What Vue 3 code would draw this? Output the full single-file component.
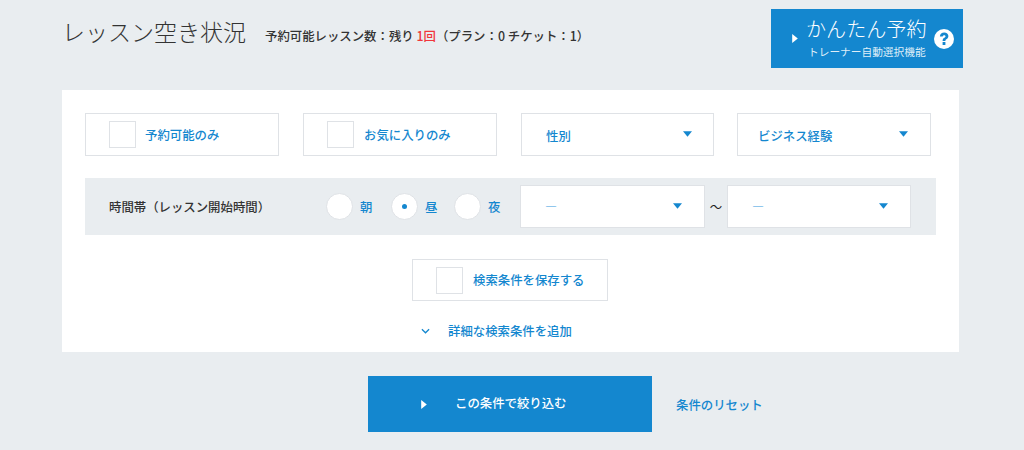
<script setup>
const chips = ['予約可能のみ', 'お気に入りのみ']
const drops = ['性別', 'ビジネス経験']
const periods = [
  { label: '朝', on: false },
  { label: '昼', on: true },
  { label: '夜', on: false },
]
</script>

<template>
  <main class="page">
    <header class="head">
      <h1 class="title">レッスン空き状況</h1>
      <p class="remain">予約可能レッスン数：残り <em>1回</em>（プラン：0 チケット：1）</p>
      <a class="easy">
        <svg class="tri easy-tri" viewBox="0 0 5 8"><path d="M0 0L5 4L0 8Z" /></svg>
        <span class="easy-text">
          <b>かんたん予約</b>
          <small>トレーナー自動選択機能</small>
        </span>
        <svg class="help" viewBox="0 0 20 20">
          <circle cx="10" cy="10" r="10" fill="#fff" />
          <path d="M5.9 7.6C6 5 7.8 3.5 10.2 3.5C12.6 3.5 14.4 5 14.4 7.1C14.4 8.7 13.5 9.6 12.4 10.3C11.6 10.8 11.4 11.2 11.4 12H8.6C8.6 10.4 9.1 9.5 10.3 8.8C11.2 8.3 11.5 7.9 11.5 7.3C11.5 6.6 11 6.2 10.2 6.2C9.3 6.2 8.8 6.8 8.7 7.6Z" fill="#1487cf" />
          <rect x="8.6" y="13" width="2.8" height="3" fill="#1487cf" />
        </svg>
      </a>
    </header>

    <section class="panel">
      <div class="filters">
        <label v-for="c in chips" :key="c" class="box chip">
          <span class="check"></span>
          <span>{{ c }}</span>
        </label>
        <div v-for="d in drops" :key="d" class="box drop">
          <span class="drop-label">{{ d }}</span>
          <svg class="caret" viewBox="0 0 10 6"><path d="M0 0H10L5 6Z" /></svg>
        </div>
      </div>

      <div class="time">
        <span class="time-label">時間帯（レッスン開始時間）</span>
        <div class="periods">
          <label v-for="p in periods" :key="p.label" class="period">
            <span class="radio" :class="{ on: p.on }"></span>
            <span>{{ p.label }}</span>
          </label>
        </div>
        <div class="box select"><span>―</span><svg class="caret" viewBox="0 0 10 6"><path d="M0 0H10L5 6Z" /></svg></div>
        <span class="tilde">～</span>
        <div class="box select"><span>―</span><svg class="caret" viewBox="0 0 10 6"><path d="M0 0H10L5 6Z" /></svg></div>
      </div>

      <label class="box save">
        <span class="check"></span>
        <span>検索条件を保存する</span>
      </label>

      <a class="more">
        <svg class="chev" viewBox="0 0 10 6"><path d="M1 1L5 5L9 1" /></svg>
        <span>詳細な検索条件を追加</span>
      </a>
    </section>

    <div class="actions">
      <a class="submit">
        <svg class="tri" viewBox="0 0 5 8"><path d="M0 0L5 4L0 8Z" /></svg>
        <span class="submit-label">この条件で絞り込む</span>
      </a>
      <a class="reset">条件のリセット</a>
    </div>
  </main>
</template>

<style>
html, body { margin: 0; background: #e9edf0; }
</style>

<style scoped>
.page {
  width: 1024px;
  height: 450px;
  overflow: hidden;
  background: #e9edf0;
  font-family: "Noto Sans CJK JP", "Noto Sans", sans-serif;
  color: #333;
}
.head {
  display: flex;
  align-items: flex-start;
  height: 90px;
  padding: 9px 61px 0 62px;
  box-sizing: border-box;
}
.title {
  margin: 5px 0 0;
  font-size: 23px;
  line-height: 34px;
  font-weight: 300;
  width: 203px;
  white-space: nowrap;
}
.remain {
  margin: 17px 0 0;
  font-size: 12.4px;
  line-height: 20px;
  font-weight: 500;
  flex: 1;
  white-space: nowrap;
}
.remain em { color: #f0363b; font-style: normal; }
.easy {
  display: flex;
  align-items: center;
  width: 192px;
  height: 59px;
  background: #1487cf;
  color: #fff;
  box-sizing: border-box;
  padding-left: 21px;
}
.easy-tri { margin: 0 8px 0 0; }
.easy-text { display: flex; flex-direction: column; width: 127px; }
.easy-text b { font-weight: 300; font-size: 20.1px; line-height: 30px; white-space: nowrap; }
.easy-text small { font-size: 10.7px; line-height: 15px; white-space: nowrap; color: #dfeef8; margin-bottom: 4px; margin-left: 2px; }
.help { width: 20px; height: 20px; margin: 1px 0 0 1px; }
.tri { width: 6px; height: 9px; fill: #fff; flex: none; }

.panel {
  width: 897px;
  height: 262px;
  margin-left: 62px;
  background: #fff;
  padding: 23px 23px 0;
  box-sizing: border-box;
  display: flex;
  flex-direction: column;
}
.filters { display: flex; gap: 24px; }
.box {
  display: flex;
  align-items: center;
  box-sizing: border-box;
  background: #fff;
  border: 1px solid #dfe2e6;
  color: #1487cf;
  font-size: 12.4px;
  font-weight: 500;
}
.chip { width: 194px; height: 43px; padding-left: 23px; }
.check {
  width: 25px;
  height: 25px;
  border: 1px solid #dfe2e6;
  background: #fff;
  flex: none;
  margin-right: 10px;
}
.chip:first-child .check { margin-right: 9px; }
.drop {
  width: 193px;
  height: 43px;
  justify-content: space-between;
  padding: 0 21px 0 24px;
}
.drop-label { padding-top: 2px; }
.drop .caret { margin-top: -2px; }
.drop:nth-child(4) { width: 194px; margin-left: -1px; padding-left: 20px; padding-right: 22px; }
.caret { width: 9px; height: 6px; fill: #1487cf; flex: none; }

.time {
  display: flex;
  align-items: center;
  width: 851px;
  height: 57px;
  margin-top: 22px;
  background: #e9edf0;
  padding-left: 24px;
  box-sizing: border-box;
}
.time-label { width: 218px; font-size: 12.4px; font-weight: 500; white-space: nowrap; }
.periods { display: flex; width: 193px; margin-left: -1px; padding-right: 1px; }
.period { display: flex; align-items: center; gap: 7px; color: #1487cf; font-size: 12.4px; font-weight: 500; }
.period:nth-child(1) { width: 65px; }
.period:nth-child(2) { width: 63px; }
.radio {
  width: 27px;
  height: 27px;
  border-radius: 50%;
  background: #fff;
  border: 1px solid #dfe2e6;
  box-sizing: border-box;
  position: relative;
  flex: none;
}
.radio.on::after {
  content: '';
  position: absolute;
  left: 10px;
  top: 10px;
  width: 5px;
  height: 5px;
  border-radius: 50%;
  background: #1487cf;
}
.select {
  width: 185px;
  height: 43px;
  justify-content: space-between;
  padding: 0 22px 0 24px;
}
.select:last-child { width: 184px; }
.select .caret { margin-top: -1px; }
.select span { font-size: 12px; line-height: 1; color: #3aa0e0; }
.tilde { width: 22px; text-align: center; font-size: 12.4px; color: #222; white-space: nowrap; }

.save {
  align-self: center;
  width: 196px;
  height: 42px;
  margin-top: 24px;
  padding-left: 23px;
  margin-left: -1px;
}
.more {
  display: flex;
  align-items: center;
  align-self: flex-start;
  margin: 20px 0 0 336px;
  height: 20px;
  color: #1487cf;
  font-size: 12.4px;
  font-weight: 500;
  white-space: nowrap;
}
.chev { width: 9px; height: 6px; fill: none; stroke: #1487cf; stroke-width: 1.4; margin-right: 18px; margin-top: -1px; }

.actions {
  display: flex;
  align-items: center;
  margin: 24px 0 0 368px;
}
.submit {
  display: flex;
  align-items: center;
  width: 284px;
  height: 56px;
  padding-left: 53px;
  box-sizing: border-box;
  background: #1487cf;
  color: #fff;
  font-size: 12.4px;
  font-weight: 500;
}
.submit .tri { margin-right: 28px; }
.submit-label { margin-top: -3px; }
.reset {
  margin: 2px 0 0 24px;
  color: #1487cf;
  font-size: 12.4px;
  font-weight: 500;
}
</style>
